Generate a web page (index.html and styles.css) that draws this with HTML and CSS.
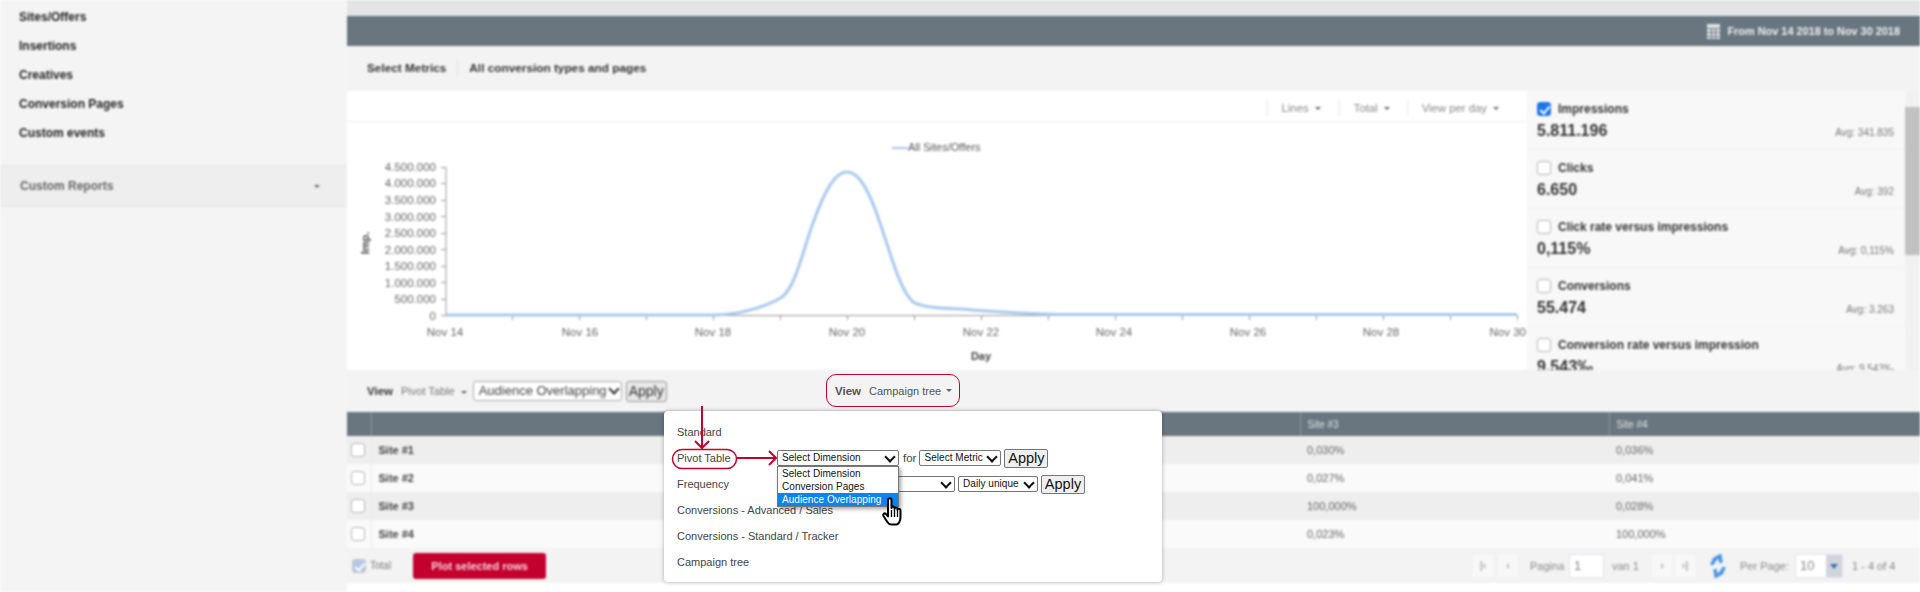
FILE: index.html
```html
<!DOCTYPE html>
<html lang="en">
<head>
    <meta charset="UTF-8">
    <meta name="viewport" content="width=device-width, initial-scale=1.0">
    <title>Audience Overlapping</title>
    <link rel="stylesheet" href="styles.css">
</head>
<body>
<div class="screen">
    <div class="backdrop">
        <aside class="sidebar">
            <ul class="side-list">
                <li>Sites/Offers</li>
                <li>Insertions</li>
                <li>Creatives</li>
                <li>Conversion Pages</li>
                <li>Custom events</li>
            </ul>
            <div class="side-reports"><span>Custom Reports</span><i class="caret"></i></div>
        </aside>
        <main class="content">
            <div class="top-strip"></div>
            <div class="date-bar">
                <svg class="cal-icon" width="13" height="15" viewBox="0 0 13 15"><path fill="#dfe3e6" d="M0 0h13v15H0z"/><path stroke="#69767f" d="M0 4.500h13M0 8.500h13M0 12.500h13M4.500 4v11M8.500 4v11"/></svg>
                <span>From Nov 14 2018 to Nov 30 2018</span>
            </div>
            <div class="metric-bar"><span>Select Metrics</span><b></b><span>All conversion types and pages</span></div>
            <div class="chart-row">
                <div class="chart">
                    <div class="chart-tools">
                        <span>Lines <i class="caret"></i></span>
                        <span>Total <i class="caret"></i></span>
                        <span>View per day <i class="caret"></i></span>
                    </div>
                    <svg class="plot" width="1180" height="248" viewBox="347 122 1180 248">
                        <g class="axis-text" text-anchor="end">
                            <text x="436" y="171">4.500.000</text>
                            <text x="436" y="187">4.000.000</text>
                            <text x="436" y="204">3.500.000</text>
                            <text x="436" y="221">3.000.000</text>
                            <text x="436" y="237">2.500.000</text>
                            <text x="436" y="254">2.000.000</text>
                            <text x="436" y="270">1.500.000</text>
                            <text x="436" y="287">1.000.000</text>
                            <text x="436" y="303">500.000</text>
                            <text x="436" y="320">0</text>
                            <text x="1526" y="336">Nov 30</text>
                        </g>
                        <path class="axis" d="M446 167.500V315.500M441 167.500h5M441 183.500h5M441 200.500h5M441 216.500h5M441 233.500h5M441 249.500h5M441 266.500h5M441 282.500h5M441 299.500h5M441 315.500h5"/>
                        <path class="axis" d="M446 315.500H1517M512.500 315v5M579.500 315v5M646.500 315v5M713.500 315v5M780.500 315v5M847.500 315v5M914.500 315v5M981.500 315v5M1048.500 315v5M1115.500 315v5M1182.500 315v5M1249.500 315v5M1316.500 315v5M1383.500 315v5M1450.500 315v5M1517.500 315v5"/>
                        <g class="axis-text" text-anchor="middle">
                            <text x="445" y="336">Nov 14</text>
                            <text x="580" y="336">Nov 16</text>
                            <text x="713" y="336">Nov 18</text>
                            <text x="847" y="336">Nov 20</text>
                            <text x="981" y="336">Nov 22</text>
                            <text x="1114" y="336">Nov 24</text>
                            <text x="1248" y="336">Nov 26</text>
                            <text x="1381" y="336">Nov 28</text>
                            <text x="981" y="360" class="axis-title">Day</text>
                        </g>
                        <text class="legend" x="908" y="151">All Sites/Offers</text>
                        <text class="axis-title" text-anchor="middle" transform="translate(369 243) rotate(-90)">Imp.</text>
                        <path class="legend-line" d="M892 148h16"/>
                        <path class="curve" d="M446 315H715C735 315 765 308 782 297C796 286 803 250 813 223C825 190 835 172 847 172C859 172 869 190 880 223C892 258 900 290 913 302C925 309 950 308 973 310C1000 312 1030 314 1060 314.500H1517"/>
                    </svg>
                </div>
                <div class="metrics">
                    <div class="metric">
                        <div class="metric-name"><i class="check on"></i>Impressions</div>
                        <div class="metric-vals"><strong>5.811.196</strong><span>Avg: 341.835</span></div>
                    </div>
                    <div class="metric">
                        <div class="metric-name"><i class="check"></i>Clicks</div>
                        <div class="metric-vals"><strong>6.650</strong><span>Avg: 392</span></div>
                    </div>
                    <div class="metric">
                        <div class="metric-name"><i class="check"></i>Click rate versus impressions</div>
                        <div class="metric-vals"><strong>0,115%</strong><span>Avg: 0,115%</span></div>
                    </div>
                    <div class="metric">
                        <div class="metric-name"><i class="check"></i>Conversions</div>
                        <div class="metric-vals"><strong>55.474</strong><span>Avg: 3.263</span></div>
                    </div>
                    <div class="metric">
                        <div class="metric-name"><i class="check"></i>Conversion rate versus impression</div>
                        <div class="metric-vals"><strong>9,543‰</strong><span>Avg: 9,543‰</span></div>
                    </div>
                </div>
                <div class="scroll"><div class="thumb"></div></div>
            </div>
            <div class="view-bar">
                <b>View</b><span class="view-pick">Pivot Table <i class="caret"></i></span>
                <div class="fake-select">Audience Overlapping</div>
                <div class="fake-apply">Apply</div>
            </div>
            <table class="grid">
                <thead>
                <tr><th></th><th></th><th></th><th></th><th>Site #3</th><th>Site #4</th></tr>
                </thead>
                <tbody>
                <tr><td><i class="check"></i></td><td class="name">Site #1</td><td></td><td></td><td>0,030%</td><td>0,036%</td></tr>
                <tr><td><i class="check"></i></td><td class="name">Site #2</td><td></td><td></td><td>0,027%</td><td>0,041%</td></tr>
                <tr><td><i class="check"></i></td><td class="name">Site #3</td><td></td><td></td><td>100,000%</td><td>0,028%</td></tr>
                <tr><td><i class="check"></i></td><td class="name">Site #4</td><td></td><td></td><td>0,023%</td><td>100,000%</td></tr>
                </tbody>
            </table>
            <div class="grid-foot">
                <i class="check on pale"></i><span class="total">Total</span>
                <div class="plot-btn">Plot selected rows</div>
                <div class="pager">
                    <span class="pg">|‹</span><span class="pg">‹</span>
                    <span class="pg-label">Pagina</span><span class="page-box">1</span><span class="pg-of">van 1</span>
                    <span class="pg pg-next">›</span><span class="pg">›|</span>
                    <svg class="refresh" width="16" height="24" viewBox="0 0 16 24"><path fill="none" stroke="#4a94e6" stroke-width="3.500" d="M2 11C3 6 6 4 10 2M3 6l7-4 1 7M14 13c-1 5-4 7-8 9M13 18l-7 4-1-7"/></svg>
                    <span class="pg-per">Per Page:</span>
                    <span class="per-box">10<i></i></span>
                    <span class="pg-count">1 - 4 of 4</span>
                </div>
            </div>
        </main>
    </div>

    <div class="view-callout"><b>View</b><span>Campaign tree</span><i class="caret"></i></div>

    <div class="popup">
        <div class="pop-row">Standard</div>
        <div class="pop-row">
            <span class="pop-label">Pivot Table</span>
            <div class="sel sel-dim">Select Dimension</div>
            <span class="for">for</span>
            <div class="sel sel-metric">Select Metric</div>
            <div class="apply">Apply</div>
        </div>
        <div class="pop-row">
            <span class="pop-label">Frequency</span>
            <div class="sel sel-freq"></div>
            <div class="sel sel-daily">Daily unique</div>
            <div class="apply">Apply</div>
        </div>
        <div class="pop-row">Conversions - Advanced / Sales</div>
        <div class="pop-row">Conversions - Standard / Tracker</div>
        <div class="pop-row">Campaign tree</div>

        <ul class="options">
            <li>Select Dimension</li>
            <li>Conversion Pages</li>
            <li class="picked">Audience Overlapping</li>
        </ul>
    </div>

    <svg class="marks" width="1920" height="592" viewBox="0 0 1920 592">
        <rect x="672.500" y="449.500" width="64" height="19" rx="9.500"/>
        <path class="arrow" d="M702 406V448M695 441l7 7 7-7M737 458H776M769 451l7 7-7 7"/>
    </svg>

    <svg class="hand" width="24" height="29" viewBox="0 0 24 29">
        <path fill="#fff" stroke="#000" stroke-width="2" stroke-linejoin="round" d="M6 3c0-2.500 3.500-2.500 3.500 0v8c0-2 3-2 3 0v1c0-2 3-2 3 0v1c0-2 3-1.500 3 .5V20c0 4-2 7.500-4 7.500H9c-2 0-3-1.500-4-3L1.500 19c-1-2 1-3.500 2.500-2l2 2.500z"/>
        <path stroke="#000" stroke-width="1.300" d="M9.500 13v7M12.500 13v7M15.500 14v6"/>
    </svg>
</div>
</body>
</html>
```

FILE: styles.css
```css
* {
    box-sizing: border-box;
}
html, body {
    margin: 0;
    height: 592px;
    overflow: hidden;
    background: #fff;
}
body {
    font-family: "Liberation Sans", Arial, sans-serif;
}
.screen {
    position: relative;
    width: 1920px;
    height: 592px;
    overflow: hidden;
}
.backdrop {
    display: flex;
    height: 592px;
    filter: blur(1.2px);
}
.caret {
    display: inline-block;
    width: 0;
    height: 0;
    margin-left: 3px;
    border: 3px solid transparent;
    border-top: 3px solid #666;
    border-bottom: 0;
    vertical-align: middle;
}

/* left menu */
.sidebar {
    width: 347px;
    flex: none;
    background: #f4f4f4;
    padding-top: 3px;
}
.side-list {
    list-style: none;
    margin: 0;
    padding: 0 0 0 19px;
    height: 162px;
}
.side-list li {
    height: 29px;
    line-height: 29px;
    font-size: 12px;
    font-weight: bold;
    color: #222;
}
.side-reports {
    height: 42px;
    display: flex;
    align-items: center;
    justify-content: space-between;
    padding: 0 27px 0 20px;
    background: #eeeeee;
    border-top: 1px solid #e6e6e6;
    border-bottom: 1px solid #e6e6e6;
    font-size: 12px;
    font-weight: bold;
    color: #666;
}

/* right part */
.content {
    flex: 1;
    min-width: 0;
    background: #fff;
}
.top-strip {
    height: 16px;
    background: #e2e4e5;
}
.date-bar {
    height: 30px;
    background: #69767f;
    display: flex;
    align-items: center;
    justify-content: flex-end;
    gap: 7px;
    padding-right: 20px;
    color: #f0f0f0;
    font-size: 10.900px;
    font-weight: bold;
}
.metric-bar {
    height: 45px;
    background: #f3f3f3;
    display: flex;
    align-items: center;
    gap: 11px;
    padding: 0 0 2px 20px;
    font-size: 11.800px;
    font-weight: bold;
    color: #333;
}
.metric-bar b {
    width: 1px;
    height: 16px;
    background: #e0e0e0;
}
.chart-row {
    display: flex;
    height: 279px;
}
.chart {
    width: 1180px;
    flex: none;
    background: #fff;
}
.chart-tools {
    height: 31px;
    display: flex;
    justify-content: flex-end;
    align-items: center;
    padding: 3px 28px 0 0;
    border-bottom: 1px solid #f0f0f0;
    font-size: 11.300px;
    color: #888;
}
.chart-tools span {
    padding-left: 14px;
    margin-left: 18px;
    border-left: 1px solid #e8e8e8;
    line-height: 16px;
}
.chart-tools span:last-child {
    margin-left: 17px;
}
.plot {
    display: block;
}
.axis-text text {
    font-size: 11.500px;
    fill: #666;
}
.axis-text .axis-title, .axis-title {
    font-size: 11px;
    fill: #444;
}
.axis-title {
    font-weight: bold;
}
.legend {
    font-size: 11px;
    fill: #555;
}
.axis {
    fill: none;
    stroke: #999;
    stroke-width: 1;
}
.curve {
    fill: none;
    stroke: #a9c9ee;
    stroke-width: 3;
}
.legend-line {
    stroke: #a9c9ee;
    stroke-width: 2;
}
.metrics {
    width: 378px;
    flex: none;
    background: #f8f8f8;
    overflow: hidden;
}
.metric {
    height: 59px;
    padding: 10px 11px 0 10px;
    border-bottom: 1px solid #f0f0f0;
}
.metric-name {
    display: flex;
    align-items: center;
    gap: 7px;
    height: 16px;
    font-size: 12px;
    font-weight: bold;
    color: #333;
}
.metric-vals {
    display: flex;
    justify-content: space-between;
    align-items: baseline;
    margin-top: 5px;
}
.metric-vals strong {
    font-size: 16px;
    color: #333;
}
.metric-vals span {
    font-size: 10px;
    color: #777;
}
.check {
    display: block;
    position: relative;
    width: 14px;
    height: 14px;
    flex: none;
    background: #fff;
    border: 1px solid #b5b5b5;
    border-radius: 3px;
}
.check.on {
    background: #1976e8;
    border-color: #1976e8;
}
.check.on::after {
    content: "";
    position: absolute;
    left: 4px;
    top: 1px;
    width: 4px;
    height: 8px;
    border: solid #fff;
    border-width: 0 2px 2px 0;
    transform: rotate(40deg);
}
.check.pale {
    background: #b4c8e6;
    border-color: #c8c8c8;
}
.scroll {
    flex: 1;
    background: #f1f1f1;
    padding: 16px 0 115px;
}
.thumb {
    height: 148px;
    background: #c1c1c1;
}

.view-bar {
    height: 42px;
    background: #f3f3f3;
    display: flex;
    align-items: center;
    padding-left: 20px;
    font-size: 11px;
    color: #777;
}
.view-bar b {
    color: #333;
    font-size: 11.500px;
    margin-right: 8px;
}
.view-pick {
    margin-right: 6px;
}
.fake-select {
    position: relative;
    width: 149px;
    height: 20px;
    border: 1px solid #aaa;
    border-radius: 3px;
    background: #fff;
    font-size: 13px;
    line-height: 18px;
    padding-left: 5px;
    color: #444;
}
.fake-select::after {
    content: "";
    position: absolute;
    right: 3px;
    top: 3px;
    width: 6px;
    height: 6px;
    border: solid #333;
    border-width: 0 2px 2px 0;
    transform: rotate(45deg);
}
.fake-apply {
    width: 41px;
    height: 21px;
    margin-left: 4px;
    border: 1px solid #999;
    border-radius: 3px;
    background: #e8e8e8;
    font-size: 14px;
    line-height: 19px;
    text-align: center;
    color: #333;
}

.grid {
    width: 1573px;
    border-collapse: collapse;
    table-layout: fixed;
    font-size: 10px;
    color: #666;
}
.grid th {
    height: 24px;
    background: #69767f;
    color: #dfe3e6;
    font-weight: normal;
    text-align: left;
    padding: 0 0 0 7px;
    border-left: 1px solid #8b969e;
}
.grid th:first-child, .grid td:first-child {
    width: 24px;
    padding: 0 0 0 4px;
    border-left: 0;
}
.grid th:nth-child(2) {
    width: 311px;
}
.grid th:nth-child(3), .grid th:nth-child(4), .grid th:nth-child(5) {
    width: 309px;
}
.grid td {
    height: 28px;
    padding: 0 0 0 7px;
    font-size: 11px;
}
.grid td:first-child {
    border-right: 1px solid #eaeaea;
}
.grid td.name {
    font-weight: bold;
    color: #444;
}
.grid tr:nth-child(odd) td {
    background: #eeeeee;
}
.grid tr:nth-child(even) td {
    background: #fafafa;
}
.grid-foot {
    height: 35px;
    background: #f3f3f3;
    display: flex;
    align-items: center;
    padding-left: 5px;
    font-size: 10px;
    color: #777;
}
.total {
    margin-left: 4px;
}
.plot-btn {
    width: 133px;
    height: 26px;
    margin-left: 22px;
    border-radius: 3px;
    background: #c4002f;
    color: #f5d5dc;
    font-size: 11px;
    font-weight: bold;
    text-align: center;
    line-height: 26px;
}
.pager {
    margin-left: auto;
    padding-right: 25px;
    display: flex;
    align-items: center;
    font-size: 11px;
    color: #888;
}
.pg {
    width: 20px;
    height: 22px;
    margin-right: 5px;
    background: #f8f8f8;
    line-height: 21px;
    text-align: center;
}
.pg-next {
    margin-right: 3px;
}
.pg-label {
    width: 39px;
    margin-left: 7px;
}
.page-box {
    width: 35px;
    height: 24px;
    background: #fff;
    border: 1px solid #e2e4ee;
    padding-left: 4px;
    line-height: 22px;
    font-size: 13px;
}
.pg-of {
    width: 40px;
    margin-left: 8px;
}
.refresh {
    margin-left: 10px;
}
.pg-per {
    width: 55px;
    margin-left: 14px;
}
.per-box {
    display: flex;
    width: 48px;
    height: 24px;
    background: #fff;
    border: 1px solid #e2e4ee;
    padding-left: 4px;
    line-height: 22px;
    font-size: 13px;
    justify-content: space-between;
}
.per-box i {
    position: relative;
    width: 16px;
    background: #d0d4dc;
}
.per-box i::after {
    content: "";
    position: absolute;
    left: 4px;
    top: 9px;
    border: 4px solid transparent;
    border-top: 5px solid #3b6cb0;
    border-bottom: 0;
}
.pg-count {
    width: 43px;
    margin-left: 9px;
    white-space: nowrap;
}

/* parts that stay sharp, on top of the blurred page */
.view-callout {
    position: absolute;
    left: 826px;
    top: 374px;
    width: 134px;
    height: 33px;
    display: flex;
    align-items: center;
    padding-left: 8px;
    background: #f3f3f3;
    border: 1px solid #c4002f;
    border-radius: 10px;
    font-size: 11px;
    color: #555;
    white-space: nowrap;
}
.view-callout b {
    font-size: 11.500px;
}
.view-callout span {
    margin-left: 8px;
}
.view-callout .caret {
    margin-left: 5px;
}
.popup {
    position: absolute;
    left: 664px;
    top: 411px;
    width: 498px;
    height: 171px;
    padding: 8px 13px;
    background: #fff;
    border-radius: 4px;
    box-shadow: 0 0 4px rgba(0, 0, 0, 0.3);
    font-size: 11px;
    color: #444;
}
.pop-row {
    height: 26px;
    display: flex;
    align-items: center;
    white-space: nowrap;
}
.pop-label {
    width: 100px;
    flex: none;
}
.sel {
    position: relative;
    height: 16px;
    flex: none;
    border: 1px solid #767676;
    border-radius: 2px;
    background: #fff;
    color: #111;
    font-size: 10px;
    letter-spacing: 0.050px;
    line-height: 14px;
    padding-left: 4px;
}
.sel::after {
    content: "";
    position: absolute;
    right: 4px;
    top: 2px;
    width: 6px;
    height: 6px;
    border: solid #111;
    border-width: 0 2px 2px 0;
    transform: rotate(45deg);
}
.sel-dim {
    width: 122px;
}
.sel-metric {
    width: 82px;
}
.sel-freq {
    width: 178px;
}
.sel-daily {
    width: 80px;
    margin-left: 3px;
}
.for {
    margin: 0 3px 0 4px;
    font-size: 11.500px;
}
.apply {
    width: 44px;
    height: 19px;
    flex: none;
    margin-left: 3px;
    border: 1px solid #767676;
    border-radius: 2px;
    background: #efefef;
    color: #111;
    font-size: 14.500px;
    line-height: 17px;
    text-align: center;
}
.options {
    position: absolute;
    left: 113px;
    top: 55px;
    width: 122px;
    margin: 0;
    padding: 0;
    list-style: none;
    background: #fff;
    border: 1px solid #767676;
    box-shadow: 2px 2px 4px rgba(0, 0, 0, 0.35);
    color: #111;
}
.options li {
    height: 13px;
    line-height: 13px;
    padding-left: 4px;
    font-size: 10px;
    letter-spacing: 0.050px;
    white-space: nowrap;
}
.options .picked {
    background: #0a84f0;
    color: #fff;
}
.marks {
    position: absolute;
    left: 0;
    top: 0;
    fill: none;
    stroke: #c4002f;
    stroke-width: 1.500;
}
.marks .arrow {
    stroke-width: 2;
}
.hand {
    position: absolute;
    left: 882px;
    top: 497px;
}
```
